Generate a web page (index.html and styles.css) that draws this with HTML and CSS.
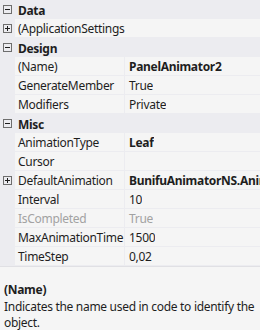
FILE: index.html
```html
<!DOCTYPE html>
<html>
<head>
<meta charset="utf-8">
<link rel="stylesheet" href="styles.css">
</head>
<body>
<div class="panel">
  <div class="grid">
    <div class="row cat"><span class="gut"><svg class="tog" viewBox="0 0 9 9"><rect x="0.5" y="0.5" width="8" height="8" fill="none" stroke="#6e6e6e"/><path d="M2 4.5h5" stroke="#1e1e1e"/></svg></span><span class="cname">Data</span></div>
    <div class="row prop"><span class="gut"><svg class="tog" viewBox="0 0 9 9"><rect x="0.5" y="0.5" width="8" height="8" fill="none" stroke="#6e6e6e"/><path d="M2 4.5h5M4.5 2v5" stroke="#1e1e1e"/></svg></span><span class="name wide">(ApplicationSettings</span></div>
    <div class="row cat"><span class="gut"><svg class="tog" viewBox="0 0 9 9"><rect x="0.5" y="0.5" width="8" height="8" fill="none" stroke="#6e6e6e"/><path d="M2 4.5h5" stroke="#1e1e1e"/></svg></span><span class="cname">Design</span></div>
    <div class="row prop"><span class="gut"></span><span class="name">(Name)</span><span class="val b">PanelAnimator2</span></div>
    <div class="row prop"><span class="gut"></span><span class="name">GenerateMember</span><span class="val">True</span></div>
    <div class="row prop"><span class="gut"></span><span class="name">Modifiers</span><span class="val">Private</span></div>
    <div class="row cat"><span class="gut"><svg class="tog" viewBox="0 0 9 9"><rect x="0.5" y="0.5" width="8" height="8" fill="none" stroke="#6e6e6e"/><path d="M2 4.5h5" stroke="#1e1e1e"/></svg></span><span class="cname">Misc</span></div>
    <div class="row prop"><span class="gut"></span><span class="name">AnimationType</span><span class="val b">Leaf</span></div>
    <div class="row prop"><span class="gut"></span><span class="name">Cursor</span><span class="val"></span></div>
    <div class="row prop"><span class="gut"><svg class="tog" viewBox="0 0 9 9"><rect x="0.5" y="0.5" width="8" height="8" fill="none" stroke="#6e6e6e"/><path d="M2 4.5h5M4.5 2v5" stroke="#1e1e1e"/></svg></span><span class="name">DefaultAnimation</span><span class="val b">BunifuAnimatorNS.Animation</span></div>
    <div class="row prop"><span class="gut"></span><span class="name">Interval</span><span class="val">10</span></div>
    <div class="row prop ro"><span class="gut"></span><span class="name">IsCompleted</span><span class="val">True</span></div>
    <div class="row prop"><span class="gut"></span><span class="name">MaxAnimationTime</span><span class="val">1500</span></div>
    <div class="row prop"><span class="gut"></span><span class="name">TimeStep</span><span class="val">0,02</span></div>
  </div>
  <div class="desc">
    <div class="dtitle">(Name)</div>
    <div class="dtext">Indicates the name used in code to identify the object.</div>
  </div>
</div>
</body>
</html>
```
FILE: styles.css
```css
html, body {
  margin: 0;
  padding: 0;
  width: 260px;
  height: 330px;
  overflow: hidden;
  background: #f5f5f5;
}
.panel {
  font-family: "Noto Sans", "Open Sans", sans-serif;
  font-size: 12px;
  letter-spacing: -0.3px;
  color: #1e1e1e;
  display: flex;
  flex-direction: column;
  height: 330px;
}
.grid {
  display: flex;
  flex-direction: column;
  border-bottom: 1px solid #e0e0e4;
}
.row {
  display: flex;
  align-items: center;
  height: 19px;
  white-space: nowrap;
  overflow: hidden;
}
.row.prop {
  background: #f5f5f5;
  border-bottom: 1px solid #ececf0;
  height: 18px;
}
.row.cat {
  background: #ececf0;
}
.gut {
  width: 15px;
  height: 100%;
  flex: none;
  background: #ececf0;
  display: flex;
  align-items: center;
  justify-content: flex-start;
  padding-left: 3px;
  box-sizing: border-box;
}
.tog {
  width: 9px;
  height: 9px;
  display: block;
}
.cname {
  font-weight: bold;
  padding-left: 3px;
  padding-top: 1px;
}
.name {
  width: 110px;
  flex: none;
  padding-left: 3px;
  padding-top: 1px;
  box-sizing: border-box;
  overflow: hidden;
  height: 100%;
  display: flex;
  align-items: center;
  border-right: 1px solid #ececf0;
}
.name.wide {
  width: auto;
  border-right: none;
  overflow: visible;
}
.val {
  padding-left: 4px;
  padding-top: 1px;
  overflow: hidden;
}
.val.b {
  font-weight: bold;
}
.ro .name, .ro .val {
  color: #a2a2a2;
}
.desc {
  padding: 15px 4px 0 4px;
  line-height: 16px;
}
.dtitle {
  font-weight: bold;
  margin-bottom: 1px;
}
```
